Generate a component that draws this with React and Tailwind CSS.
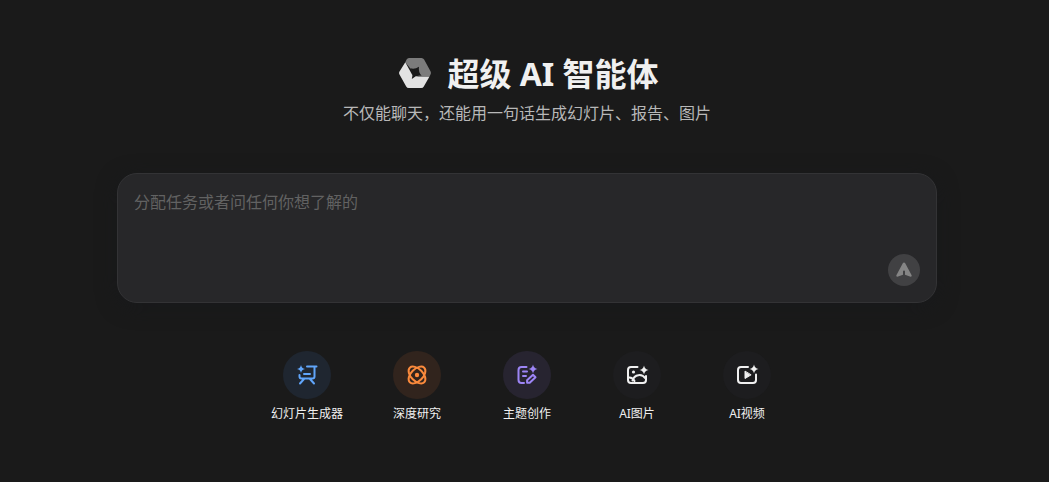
import React from 'react'

function Logo() {
    return (
        <svg className="w-8 h-8" viewBox="0 0 32 32" aria-hidden="true">
            <path fill="#7c7c7c" d="M10 0h12.5a3 3 0 0 1 2.6 1.5l6.4 11.8a3.4 3.4 0 0 1 0 3.2L30.4 18.8H18L6.3 4.2 7.6 1.500A3 3 0 0 1 10 0z" />
            <path fill="#e2e2e2" d="M6.300 4.200 13 16.500 19 18.800H30.400L24.800 28.400a3 3 0 0 1-2.600 1.600H9.800a3 3 0 0 1-2.600-1.600L.5 16.600a3.400 3.400 0 0 1 0-3.200z" />
            <path fill="#1a1a1a" d="M11.300 10.300q4.400 1.400 8.700-1.600-.9 5.200 2.600 9-5.200-.8-9.800 3.300 1.800-6-1.500-10.700z" />
        </svg>
    )
}

function SlidesIcon() {
    return (
        <svg className="w-6 h-6" viewBox="0 0 24 24" fill="none" stroke="currentColor" strokeWidth="2" strokeLinecap="round" strokeLinejoin="round">
            <path d="M12 3.500h9.500M19.500 4v9.500a2 2 0 0 1-2 2H6.500a2 2 0 0 1-2-2V12M9 11h6M9 16l-4 4.500M15 16l4 4.500" />
            <path fill="currentColor" stroke="none" d="M6 2q.6 3.400 4 4-3.400.6-4 4-.6-3.400-4-4 3.400-.6 4-4z" />
        </svg>
    )
}

function ResearchIcon() {
    return (
        <svg className="w-6 h-6" viewBox="0 0 24 24" fill="none" stroke="currentColor" strokeWidth="2">
            <ellipse cx="12" cy="12" rx="10.200" ry="6" transform="rotate(45 12 12)" />
            <ellipse cx="12" cy="12" rx="10.200" ry="6" transform="rotate(-45 12 12)" />
            <circle cx="12" cy="12" r="2.200" fill="currentColor" stroke="none" />
        </svg>
    )
}

function WritingIcon() {
    return (
        <svg className="w-6 h-6" viewBox="0 0 24 24" fill="none" stroke="currentColor" strokeWidth="2" strokeLinecap="round" strokeLinejoin="round">
            <path d="M11.500 4H6.500a3 3 0 0 0-3 3v10a3 3 0 0 0 3 3H9M8 8.500h4M8 13h3M18 11.700l2.500 2.500-5.800 5.600h-2.600v-2.500z" />
            <path fill="currentColor" stroke="none" d="M18 1.500q.7 3.800 4.500 4.500-3.800.7-4.500 4.500-.7-3.800-4.500-4.500 3.800-.7 4.500-4.500z" />
        </svg>
    )
}

function ImageIcon() {
    return (
        <svg className="w-6 h-6" viewBox="0 0 24 24" fill="none" stroke="currentColor" strokeWidth="2" strokeLinecap="round" strokeLinejoin="round">
            <path d="M12.500 4H6a3 3 0 0 0-3 3v10a3 3 0 0 0 3 3h12a3 3 0 0 0 3-3v-4M3.500 14.500Q7.500 14 9.500 18M7.500 17.500c2-6.500 9.500-7 13-2" />
            <circle cx="8.500" cy="9" r="1.600" fill="currentColor" stroke="none" />
            <path fill="currentColor" stroke="none" d="M19 2.500q.7 3.800 4.500 4.500-3.800.7-4.500 4.500-.7-3.800-4.500-4.500 3.800-.7 4.500-4.500z" />
        </svg>
    )
}

function VideoIcon() {
    return (
        <svg className="w-6 h-6" viewBox="0 0 24 24" fill="none" stroke="currentColor" strokeWidth="2" strokeLinecap="round" strokeLinejoin="round">
            <path d="M13 4H6a3 3 0 0 0-3 3v10a3 3 0 0 0 3 3h12a3 3 0 0 0 3-3v-5.500" />
            <path fill="currentColor" strokeWidth="1" d="M10 8.500v7l5.800-3.500z" />
            <path fill="currentColor" stroke="none" d="M19 1.500q.7 3.800 4.500 4.500-3.800.7-4.500 4.500-.7-3.800-4.500-4.500 3.800-.7 4.500-4.500z" />
        </svg>
    )
}

const tools = [
    { label: '幻灯片生成器', icon: SlidesIcon, color: 'bg-[#1f2630] text-[#60a5fa]' },
    { label: '深度研究', icon: ResearchIcon, color: 'bg-[#31241d] text-[#fb8a3c]' },
    { label: '主题创作', icon: WritingIcon, color: 'bg-[#272430] text-[#9d85f5]' },
    { label: 'AI图片', icon: ImageIcon, color: 'bg-[#1d1d1f] text-[#f0f0f0]' },
    { label: 'AI视频', icon: VideoIcon, color: 'bg-[#1d1d1f] text-[#f0f0f0]' },
]

function App() {
    return (
        <main className="min-h-screen bg-[#1a1a1a] pl-5 pr-[15px] pt-14 pb-10 flex flex-col items-center font-['Noto_Sans','Noto_Sans_CJK_SC',sans-serif]">
            <header className="flex flex-col items-center">
                <div className="flex items-center gap-4 pl-1">
                    <Logo />
                    <h1 className="text-[32px] leading-9 font-bold text-[#f0f0f0]">超级 AI 智能体</h1>
                </div>
                <p className="mt-2 text-base leading-[26px] text-[#b8b8b8]">不仅能聊天，还能用一句话生成幻灯片、报告、图片</p>
            </header>

            <form className="relative mt-[47px] w-full max-w-[820px]" onSubmit={(e) => e.preventDefault()}>
                <textarea
                    className="block w-full h-[130px] resize-none rounded-[20px] border border-[#333335] bg-[#272729] px-4 py-4 text-base text-[#f0f0f0] placeholder:text-[#626262] focus:outline-none shadow-[0_4px_20px_#18191b]"
                    aria-label="分配任务或者问任何你想了解的"
                    placeholder="分配任务或者问任何你想了解的"
                />
                <button type="submit" aria-label="发送" className="absolute right-[17px] bottom-[17px] flex h-8 w-8 items-center justify-center rounded-full bg-[#414143] text-[#858585]">
                    <svg className="w-4 h-4" viewBox="0 0 16 16" fill="currentColor">
                        <path d="M6.800 1.200a1.400 1.400 0 0 1 2.400 0l6.300 11.900c.6 1.200-.6 1.900-1.600 1.500L9 12.700V9.500a1 1 0 0 0-2 0v3.200l-4.900 1.900C1.100 15-.1 14.300.5 13.100z" />
                    </svg>
                </button>
            </form>

            <nav className="mt-12 flex flex-wrap justify-center">
                {tools.map(({ label, icon: Icon, color }) => (
                    <button key={label} type="button" className="flex w-[110px] flex-col items-center gap-1 text-xs leading-[22px] text-[#f0f0f0]">
                        <span className={`flex h-12 w-12 items-center justify-center rounded-full ${color}`}>
                            <Icon />
                        </span>
                        {label}
                    </button>
                ))}
            </nav>
        </main>
    )
}

export default App
